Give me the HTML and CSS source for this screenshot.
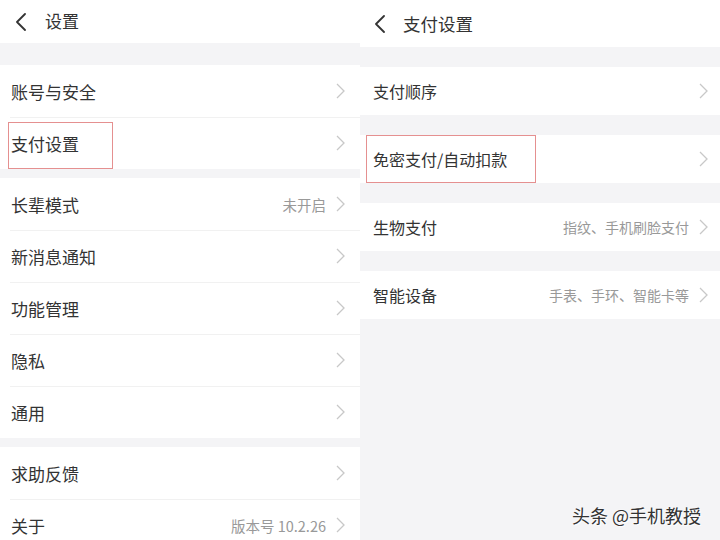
FILE: index.html
```html
<!DOCTYPE html>
<html lang="zh-CN">
<head>
  <meta charset="UTF-8" />
  <meta name="viewport" content="width=device-width, initial-scale=1.0">
  <title>设置</title>
  <link rel="stylesheet" href="styles.css">
</head>
<body>

  <div class="screens">

    <div class="screen left">
      <div class="header">
        <svg class="back" width="14" height="18" viewBox="0 0 14 18"><polyline points="11,1 3,9 11,17" /></svg>
        <span class="title">设置</span>
      </div>

      <div class="group">
        <div class="row"><span class="label">账号与安全</span><svg class="arrow" width="9" height="16" viewBox="0 0 9 16"><polyline points="1,1 8,8 1,15" /></svg></div>
        <div class="row">
          <span class="mark"></span>
          <span class="label">支付设置</span><svg class="arrow" width="9" height="16" viewBox="0 0 9 16"><polyline points="1,1 8,8 1,15" /></svg>
        </div>
      </div>

      <div class="group">
        <div class="row"><span class="label">长辈模式</span><span class="value">未开启</span><svg class="arrow" width="9" height="16" viewBox="0 0 9 16"><polyline points="1,1 8,8 1,15" /></svg></div>
        <div class="row"><span class="label">新消息通知</span><svg class="arrow" width="9" height="16" viewBox="0 0 9 16"><polyline points="1,1 8,8 1,15" /></svg></div>
        <div class="row"><span class="label">功能管理</span><svg class="arrow" width="9" height="16" viewBox="0 0 9 16"><polyline points="1,1 8,8 1,15" /></svg></div>
        <div class="row"><span class="label">隐私</span><svg class="arrow" width="9" height="16" viewBox="0 0 9 16"><polyline points="1,1 8,8 1,15" /></svg></div>
        <div class="row"><span class="label">通用</span><svg class="arrow" width="9" height="16" viewBox="0 0 9 16"><polyline points="1,1 8,8 1,15" /></svg></div>
      </div>

      <div class="group last">
        <div class="row"><span class="label">求助反馈</span><svg class="arrow" width="9" height="16" viewBox="0 0 9 16"><polyline points="1,1 8,8 1,15" /></svg></div>
        <div class="row"><span class="label">关于</span><span class="value">版本号 10.2.26</span><svg class="arrow" width="9" height="16" viewBox="0 0 9 16"><polyline points="1,1 8,8 1,15" /></svg></div>
      </div>
    </div>

    <div class="screen right">
      <div class="header">
        <svg class="back" width="14" height="18" viewBox="0 0 14 18"><polyline points="11,1 3,9 11,17" /></svg>
        <span class="title">支付设置</span>
      </div>

      <div class="group">
        <div class="row"><span class="label">支付顺序</span><svg class="arrow" width="9" height="16" viewBox="0 0 9 16"><polyline points="1,1 8,8 1,15" /></svg></div>
      </div>
      <div class="group">
        <div class="row">
          <span class="mark"></span>
          <span class="label">免密支付/自动扣款</span><svg class="arrow" width="9" height="16" viewBox="0 0 9 16"><polyline points="1,1 8,8 1,15" /></svg>
        </div>
      </div>
      <div class="group">
        <div class="row"><span class="label">生物支付</span><span class="value">指纹、手机刷脸支付</span><svg class="arrow" width="9" height="16" viewBox="0 0 9 16"><polyline points="1,1 8,8 1,15" /></svg></div>
      </div>
      <div class="group">
        <div class="row"><span class="label">智能设备</span><span class="value">手表、手环、智能卡等</span><svg class="arrow" width="9" height="16" viewBox="0 0 9 16"><polyline points="1,1 8,8 1,15" /></svg></div>
      </div>
    </div>

  </div>

  <div class="watermark">头条 @手机教授</div>

</body>
</html>
```

FILE: styles.css
```css
body {
  margin: 0;
  width: 720px;
  height: 540px;
  overflow: hidden;
  font-family: "Noto Sans CJK SC", "Noto Sans", sans-serif;
  color: #333;
  background: #f4f4f6;
  position: relative;
}

.screens {
  display: flex;
  height: 540px;
}

.screen {
  width: 360px;
  height: 540px;
  overflow: hidden;
  background: #f4f4f6;
  display: flex;
  flex-direction: column;
}

/* ======= HEADER ======= */
.header {
  background: #fff;
  display: flex;
  align-items: center;
  flex-shrink: 0;
}

.back polyline {
  fill: none;
  stroke: #333;
  stroke-width: 1.8;
  stroke-linecap: round;
  stroke-linejoin: round;
}

.title {
  color: #333;
}

.left .header {
  height: 43px;
  padding-left: 14px;
  margin-bottom: 22px;
}

.left .title {
  font-size: 17px;
  margin-left: 17px;
  margin-top: -2px;
}

.right .header {
  height: 47px;
  padding-left: 13px;
  margin-bottom: 20px;
}

.right .title {
  font-size: 17.5px;
  margin-left: 16px;
}

/* ======= ROWS ======= */
.group {
  background: #fff;
  flex-shrink: 0;
}

.left .group {
  margin-bottom: 9px;
}

.right .group {
  margin-bottom: 20px;
}

.row {
  display: flex;
  align-items: center;
  position: relative;
}

.left .row {
  height: 52px;
  padding-left: 11px;
  padding-right: 15px;
  font-size: 17px;
}

.left .row + .row {
  background: linear-gradient(#f1f1f1, #f1f1f1) no-repeat 10px 0 / 100% 1px;
}

.right .row {
  height: 48px;
  padding-left: 13px;
  padding-right: 12px;
  font-size: 16px;
}

.label {
  flex-grow: 1;
}

.value {
  color: #999;
  margin-right: 10px;
}

.left .value {
  font-size: 14.5px;
}

.right .value {
  font-size: 14px;
}

.arrow polyline {
  fill: none;
  stroke: #c8c8c8;
  stroke-width: 1.3;
}

/* red highlight box */
.mark {
  position: absolute;
  border: 1px solid #e59090;
  pointer-events: none;
}

.left .mark {
  left: 8px;
  top: 5px;
  width: 103px;
  height: 45px;
}

.right .mark {
  left: 6px;
  top: 0;
  width: 168px;
  height: 46px;
}

.watermark {
  position: absolute;
  left: 572px;
  top: 502px;
  font-size: 18px;
  color: #333;
  text-shadow: 0 0 2px #fff, 1px 1px 1px #fff;
}
```
